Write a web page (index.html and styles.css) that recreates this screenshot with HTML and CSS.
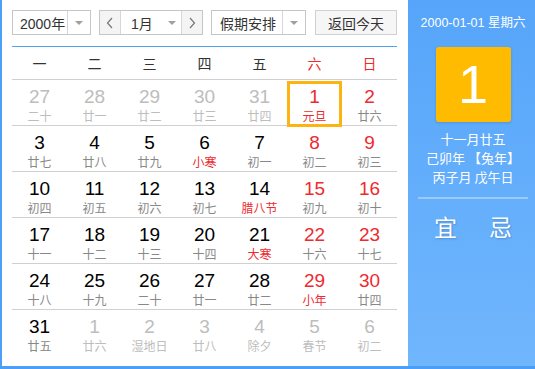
FILE: index.html
```html
<!DOCTYPE html>
<html lang="zh-CN">
<head>
    <meta charset="UTF-8">
    <title>万年历</title>
    <link rel="stylesheet" href="styles.css">
</head>
<body>
    <div class="calendar">
        <!-- left: toolbar + month grid -->
        <div class="main">
            <div class="toolbar">
                <div class="select year">
                    <span class="val">2000年</span>
                    <span class="drop"><i class="tri"></i></span>
                </div>
                <div class="select month">
                    <span class="nav"><svg width="8" height="12" viewBox="0 0 8 12"><polyline points="6,1 1.5,6 6,11" fill="none" stroke="#777" stroke-width="1.2"/></svg></span>
                    <span class="val">1月</span>
                    <span class="drop small"><i class="tri"></i></span>
                    <span class="nav next"><svg width="8" height="12" viewBox="0 0 8 12"><polyline points="2,1 6.5,6 2,11" fill="none" stroke="#777" stroke-width="1.2"/></svg></span>
                </div>
                <div class="select holiday">
                    <span class="val">假期安排</span>
                    <span class="drop"><i class="tri"></i></span>
                </div>
                <button class="today-btn">返回今天</button>
            </div>

            <div class="week head">
                <span>一</span><span>二</span><span>三</span><span>四</span><span>五</span>
                <span class="red">六</span><span class="red">日</span>
            </div>

            <div class="week">
                <div class="day other"><b>27</b><em>二十</em></div>
                <div class="day other"><b>28</b><em>廿一</em></div>
                <div class="day other"><b>29</b><em>廿二</em></div>
                <div class="day other"><b>30</b><em>廿三</em></div>
                <div class="day other"><b>31</b><em>廿四</em></div>
                <div class="day weekend selected"><b>1</b><em class="fest">元旦</em></div>
                <div class="day weekend"><b>2</b><em>廿六</em></div>
            </div>
            <div class="week">
                <div class="day"><b>3</b><em>廿七</em></div>
                <div class="day"><b>4</b><em>廿八</em></div>
                <div class="day"><b>5</b><em>廿九</em></div>
                <div class="day"><b>6</b><em class="fest">小寒</em></div>
                <div class="day"><b>7</b><em>初一</em></div>
                <div class="day weekend"><b>8</b><em>初二</em></div>
                <div class="day weekend"><b>9</b><em>初三</em></div>
            </div>
            <div class="week">
                <div class="day"><b>10</b><em>初四</em></div>
                <div class="day"><b>11</b><em>初五</em></div>
                <div class="day"><b>12</b><em>初六</em></div>
                <div class="day"><b>13</b><em>初七</em></div>
                <div class="day"><b>14</b><em class="fest">腊八节</em></div>
                <div class="day weekend"><b>15</b><em>初九</em></div>
                <div class="day weekend"><b>16</b><em>初十</em></div>
            </div>
            <div class="week">
                <div class="day"><b>17</b><em>十一</em></div>
                <div class="day"><b>18</b><em>十二</em></div>
                <div class="day"><b>19</b><em>十三</em></div>
                <div class="day"><b>20</b><em>十四</em></div>
                <div class="day"><b>21</b><em class="fest">大寒</em></div>
                <div class="day weekend"><b>22</b><em>十六</em></div>
                <div class="day weekend"><b>23</b><em>十七</em></div>
            </div>
            <div class="week">
                <div class="day"><b>24</b><em>十八</em></div>
                <div class="day"><b>25</b><em>十九</em></div>
                <div class="day"><b>26</b><em>二十</em></div>
                <div class="day"><b>27</b><em>廿一</em></div>
                <div class="day"><b>28</b><em>廿二</em></div>
                <div class="day weekend"><b>29</b><em class="fest">小年</em></div>
                <div class="day weekend"><b>30</b><em>廿四</em></div>
            </div>
            <div class="week">
                <div class="day"><b>31</b><em>廿五</em></div>
                <div class="day other"><b>1</b><em>廿六</em></div>
                <div class="day other"><b>2</b><em>湿地日</em></div>
                <div class="day other"><b>3</b><em>廿八</em></div>
                <div class="day other"><b>4</b><em>除夕</em></div>
                <div class="day other"><b>5</b><em>春节</em></div>
                <div class="day other"><b>6</b><em>初二</em></div>
            </div>
        </div>

        <!-- right: selected day detail -->
        <div class="side">
            <div class="side-date">2000-01-01 星期六</div>
            <div class="big-day">1</div>
            <div class="lunar">
                <p>十一月廿五</p>
                <p>己卯年 【兔年】</p>
                <p>丙子月 戊午日</p>
            </div>
            <div class="yiji">
                <span>宜</span>
                <span>忌</span>
            </div>
        </div>
    </div>
</body>
</html>
```

FILE: styles.css
```css
body {
    margin: 0;
    font-family: "Liberation Sans", "Noto Sans CJK SC", sans-serif;
    background-color: #fff;
}
.calendar {
    display: flex;
    width: 533px;
    height: 366px;
    border-left: 2px solid #4c9ff6;
    border-bottom: 3px solid #4c9ff6;
    overflow: hidden;
}
.main {
    width: 385px;
    padding: 10px 11px 0 10px;
    background-color: #fff;
}
.toolbar {
    display: flex;
    height: 25px;
    padding-bottom: 11px;
    border-bottom: 1px solid #4ea2f2;
}
.select {
    display: flex;
    align-items: stretch;
    height: 23px;
    border: 1px solid #c6c6c6;
    font-size: 14px;
    color: #333;
    margin-right: 8px;
}
.select .val {
    display: flex;
    align-items: center;
    padding-left: 7px;
}
.year {
    width: 77px;
}
.year .val {
    width: 47px;
}
.holiday {
    width: 93px;
    margin-right: 9px;
}
.holiday .val {
    width: 62px;
    padding-left: 8px;
}
.drop {
    display: flex;
    align-items: center;
    justify-content: center;
    flex: 1;
    border-left: 1px solid #d6d6d6;
}
.drop.small {
    border-left: none;
    width: 18px;
    flex: none;
}
.tri {
    width: 0;
    height: 0;
    border-left: 4px solid transparent;
    border-right: 4px solid transparent;
    border-top: 4px solid #a0a0a0;
}
.month {
    width: 102px;
}
.month .val {
    width: 34px;
    padding-left: 10px;
}
.nav {
    display: flex;
    align-items: center;
    justify-content: center;
    width: 21px;
    background-color: #f4f4f4;
    border-right: 1px solid #d6d6d6;
}
.nav.next {
    border-right: none;
    border-left: 1px solid #d6d6d6;
}
.today-btn {
    width: 82px;
    height: 25px;
    padding: 0;
    border: 1px solid #d0d0d0;
    background-color: #f6f6f6;
    font-family: "Noto Sans CJK SC", sans-serif;
    font-size: 14px;
    color: #333;
}
.week {
    display: grid;
    grid-template-columns: repeat(7, 1fr);
    height: 45px;
    border-top: 1px solid #d0d0d0;
}
.week.head {
    height: 32px;
    border-top: none;
    align-items: center;
    text-align: center;
    font-family: "Noto Sans CJK SC", sans-serif;
    font-size: 14px;
    color: #333;
}
.red {
    color: #ee2a2f;
}
.day {
    display: flex;
    flex-direction: column;
    align-items: center;
    padding-top: 6px;
    box-sizing: border-box;
}
.day b {
    font-weight: normal;
    font-size: 19px;
    line-height: 21px;
    color: #000;
}
.day em {
    font-style: normal;
    font-family: "Noto Sans CJK SC", sans-serif;
    font-size: 12px;
    line-height: 17px;
    color: #888;
}
.day.weekend b {
    color: #ee2a2f;
}
.day em.fest {
    color: #ee2a2f;
}
.day.other b {
    color: #bdbdbd;
}
.day.other em {
    color: #bdbdbd;
}
.day.selected {
    border: 3px solid #fdb311;
    margin-top: 1px;
    padding-top: 2px;
}
.side {
    flex: 1;
    display: flex;
    flex-direction: column;
    align-items: center;
    padding-left: 3px;
    background: linear-gradient(#56a5fa, #70b6fd);
    color: #fff;
}
.side-date {
    margin-top: 15px;
    font-size: 12.5px;
    line-height: 17px;
}
.big-day {
    width: 75px;
    height: 75px;
    margin-top: 15px;
    border-radius: 3px;
    background-color: #ffbb00;
    box-shadow: 0 1px 3px rgba(0, 0, 0, 0.15);
    font-size: 54px;
    line-height: 75px;
    text-align: center;
    font-weight: 300;
}
.lunar {
    margin-top: 7px;
    font-family: "Noto Sans CJK SC", sans-serif;
    font-size: 13px;
    line-height: 19px;
    text-align: center;
}
.lunar p {
    margin: 0;
}
.yiji {
    display: flex;
    justify-content: space-around;
    width: 110px;
    margin-top: 11px;
    padding-top: 10px;
    border-top: 2px solid #9ccbfb;
    font-family: "Noto Sans CJK SC", sans-serif;
    font-size: 23px;
    text-shadow: 1px 1px 2px rgba(0, 0, 0, 0.2);
}
```
